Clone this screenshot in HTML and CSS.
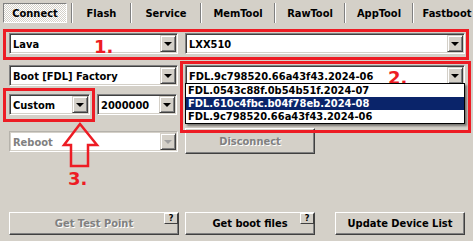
FILE: index.html
```html
<!DOCTYPE html>
<html>
<head>
    <title>Connect</title>
    <link rel="stylesheet" href="styles.css">
</head>
<body>
    <div class="window">
        <div class="tabs">
            <div class="tab tab-connect active">Connect</div>
            <div class="tab-sep"></div>
            <div class="tab tab-flash">Flash</div>
            <div class="tab-sep"></div>
            <div class="tab tab-service">Service</div>
            <div class="tab-sep"></div>
            <div class="tab tab-memtool">MemTool</div>
            <div class="tab-sep"></div>
            <div class="tab tab-rawtool">RawTool</div>
            <div class="tab-sep"></div>
            <div class="tab tab-apptool">AppTool</div>
            <div class="tab-sep"></div>
            <div class="tab tab-fastboot">Fastboot</div>
        </div>

        <div class="panel">
            <div class="row row-1">
                <div class="combo col-left">
                    <span class="combo-text">Lava</span>
                    <span class="combo-btn"></span>
                </div>
                <div class="combo col-right">
                    <span class="combo-text">LXX510</span>
                    <span class="combo-btn"></span>
                </div>
            </div>

            <div class="row row-2">
                <div class="combo col-left">
                    <span class="combo-text">Boot [FDL] Factory</span>
                    <span class="combo-btn"></span>
                </div>
                <div class="combo col-right combo-open">
                    <span class="combo-text">FDL.9c798520.66a43f43.2024-06</span>
                    <span class="combo-btn"></span>
                    <ul class="dropdown">
                        <li>FDL.0543c88f.0b54b51f.2024-07</li>
                        <li class="selected">FDL.610c4fbc.b04f78eb.2024-08</li>
                        <li>FDL.9c798520.66a43f43.2024-06</li>
                    </ul>
                </div>
            </div>

            <div class="row row-3">
                <div class="combo combo-mode">
                    <span class="combo-text">Custom</span>
                    <span class="combo-btn"></span>
                </div>
                <div class="combo combo-baud">
                    <span class="combo-text">2000000</span>
                    <span class="combo-btn"></span>
                </div>
            </div>

            <div class="row row-4">
                <div class="combo col-left disabled">
                    <span class="combo-text">Reboot</span>
                    <span class="combo-btn"></span>
                </div>
                <button class="btn btn-disconnect" disabled>Disconnect</button>
            </div>

            <div class="row row-5">
                <button class="btn btn-testpoint" disabled>Get Test Point<span class="help">?</span></button>
                <button class="btn btn-bootfiles">Get boot files<span class="help">?</span></button>
                <button class="btn btn-update">Update Device List</button>
            </div>
        </div>

        <!-- annotations drawn over the screenshot -->
        <div class="mark mark-1"></div>
        <div class="mark mark-2"></div>
        <div class="mark mark-3"></div>
        <span class="mark-label label-1">1.</span>
        <span class="mark-label label-2">2.</span>
        <span class="mark-label label-3">3.</span>
        <svg class="arrow" width="42" height="50" viewBox="0 0 42 50">
            <polygon points="20,4 4,25 11,25 11,46 28,46 28,25 37,25" fill="none" stroke="#ed1c24" stroke-width="2.5"/>
        </svg>
    </div>
</body>
</html>
```

FILE: styles.css
```css
body {
    margin: 0;
    background: #d4d0c8;
    font-family: "DejaVu Sans Condensed", "DejaVu Sans", sans-serif;
    font-weight: bold;
    font-size: 11px;
    color: #000;
}
.window {
    position: relative;
    width: 473px;
    height: 241px;
    overflow: hidden;
}

/* tab strip */
.tabs {
    display: flex;
    align-items: center;
    padding: 3px 0 0 3px;
    white-space: nowrap;
}
.tab {
    display: flex;
    align-items: center;
    justify-content: center;
    height: 20px;
    flex: none;
    box-sizing: border-box;
}
.tab.active {
    border: 1px solid;
    border-color: #808080 #fff #fff #808080;
    background: repeating-conic-gradient(#fff 0 25%, #d4d0c8 0 50%) 0 0 / 2px 2px;
    margin-right: 4px;
}
.tab-sep {
    flex: none;
    height: 20px;
    border-left: 1px solid #808080;
    border-right: 1px solid #fff;
}
.tab-connect { width: 64px; }
.tab-flash { width: 57px; }
.tab-service { width: 68px; }
.tab-memtool { width: 72px; }
.tab-rawtool { width: 68px; }
.tab-apptool { width: 66px; }
.tab-fastboot { width: 66px; }

/* main panel */
.panel {
    display: flex;
    flex-direction: column;
    padding: 0 8px 0 9px;
}
.row {
    display: flex;
    align-items: center;
    gap: 7px;
}
.row-1 { margin-top: 10px; }
.row-2 { margin-top: 11px; }
.row-3 { margin-top: 8px; }
.row-4 { margin-top: 13px; }
.row-5 { margin-top: 58px; gap: 6px; }

.col-left { width: 169px; }
.col-right { width: 280px; }

/* combo boxes */
.combo {
    position: relative;
    display: flex;
    align-items: center;
    box-sizing: border-box;
    height: 21px;
    padding: 1px;
    background: #fff;
    border: 1px solid;
    border-color: #808080 #fff #fff #808080;
    box-shadow: inset 1px 1px #404040, inset -1px -1px #d4d0c8;
}
.combo-text {
    flex: 1;
    padding: 2px 0 0 2px;
    white-space: nowrap;
    overflow: hidden;
}
.combo-btn {
    flex: none;
    display: flex;
    align-items: center;
    justify-content: center;
    box-sizing: border-box;
    width: 16px;
    height: 17px;
    background: #d4d0c8;
    border: 1px solid;
    border-color: #d4d0c8 #404040 #404040 #d4d0c8;
    box-shadow: inset 1px 1px #fff, inset -1px -1px #808080;
}
.combo-btn::after {
    content: '';
    border-left: 4px solid transparent;
    border-right: 4px solid transparent;
    border-top: 4px solid #000;
    margin-top: 1px;
}
.combo-mode { width: 81px; }
.combo-baud { width: 80px; }

.combo.disabled {
    border-color: #b5b2ab #fff #fff #b5b2ab;
    box-shadow: inset 1px 1px #d4d0c8, inset -1px -1px #d4d0c8;
}
.combo.disabled .combo-text { color: #808080; }
.combo.disabled .combo-btn::after { border-top-color: #a0a0a0; }

/* open list of the FDL combo */
.dropdown {
    position: absolute;
    top: 17px;
    left: -1px;
    right: -1px;
    margin: 0;
    padding: 0;
    list-style: none;
    background: #fff;
    border: 1px solid #000;
    box-shadow: 2px 2px 2px rgba(0, 0, 0, 0.45);
    z-index: 2;
}
.dropdown li {
    height: 13px;
    line-height: 13px;
    padding-left: 2px;
    white-space: nowrap;
}
.dropdown li.selected {
    background: #0a246a;
    color: #fff;
}

/* push buttons */
.btn {
    position: relative;
    flex: none;
    box-sizing: border-box;
    padding: 0;
    font: inherit;
    color: #000;
    background: #d4d0c8;
    border: 1px solid;
    border-color: #fff #404040 #404040 #fff;
    box-shadow: inset -1px -1px #808080, inset 1px 1px #d4d0c8;
}
.btn:disabled {
    color: #808080;
    text-shadow: 1px 1px #fff;
}
.btn-disconnect { width: 130px; height: 26px; }
.btn-testpoint { width: 170px; height: 23px; }
.btn-bootfiles { width: 130px; height: 23px; }
.btn-update { width: 130px; height: 23px; margin-left: 14px; }

.help {
    position: absolute;
    top: 0;
    right: 0;
    width: 14px;
    height: 11px;
    box-sizing: border-box;
    font-size: 9px;
    line-height: 9px;
    color: #000;
    text-shadow: none;
    background: #d4d0c8;
    border: 1px solid;
    border-color: #fff #404040 #404040 #fff;
}

/* red annotations */
.mark {
    position: absolute;
    border: 3px solid #ed1c24;
    box-sizing: border-box;
    pointer-events: none;
    z-index: 3;
}
.mark-1 { left: 3px; top: 29px; width: 466px; height: 31px; }
.mark-2 { left: 180px; top: 61px; width: 291px; height: 72px; }
.mark-3 { left: 3px; top: 88px; width: 92px; height: 34px; }

.mark-label {
    position: absolute;
    font-family: "DejaVu Sans", sans-serif;
    font-weight: bold;
    font-size: 18px;
    line-height: 18px;
    color: #ed1c24;
    z-index: 3;
}
.label-1 { left: 94px; top: 38px; }
.label-2 { left: 388px; top: 69px; z-index: 1; }
.label-3 { left: 68px; top: 170px; }

.arrow {
    position: absolute;
    left: 60px;
    top: 120px;
    z-index: 3;
}
```
